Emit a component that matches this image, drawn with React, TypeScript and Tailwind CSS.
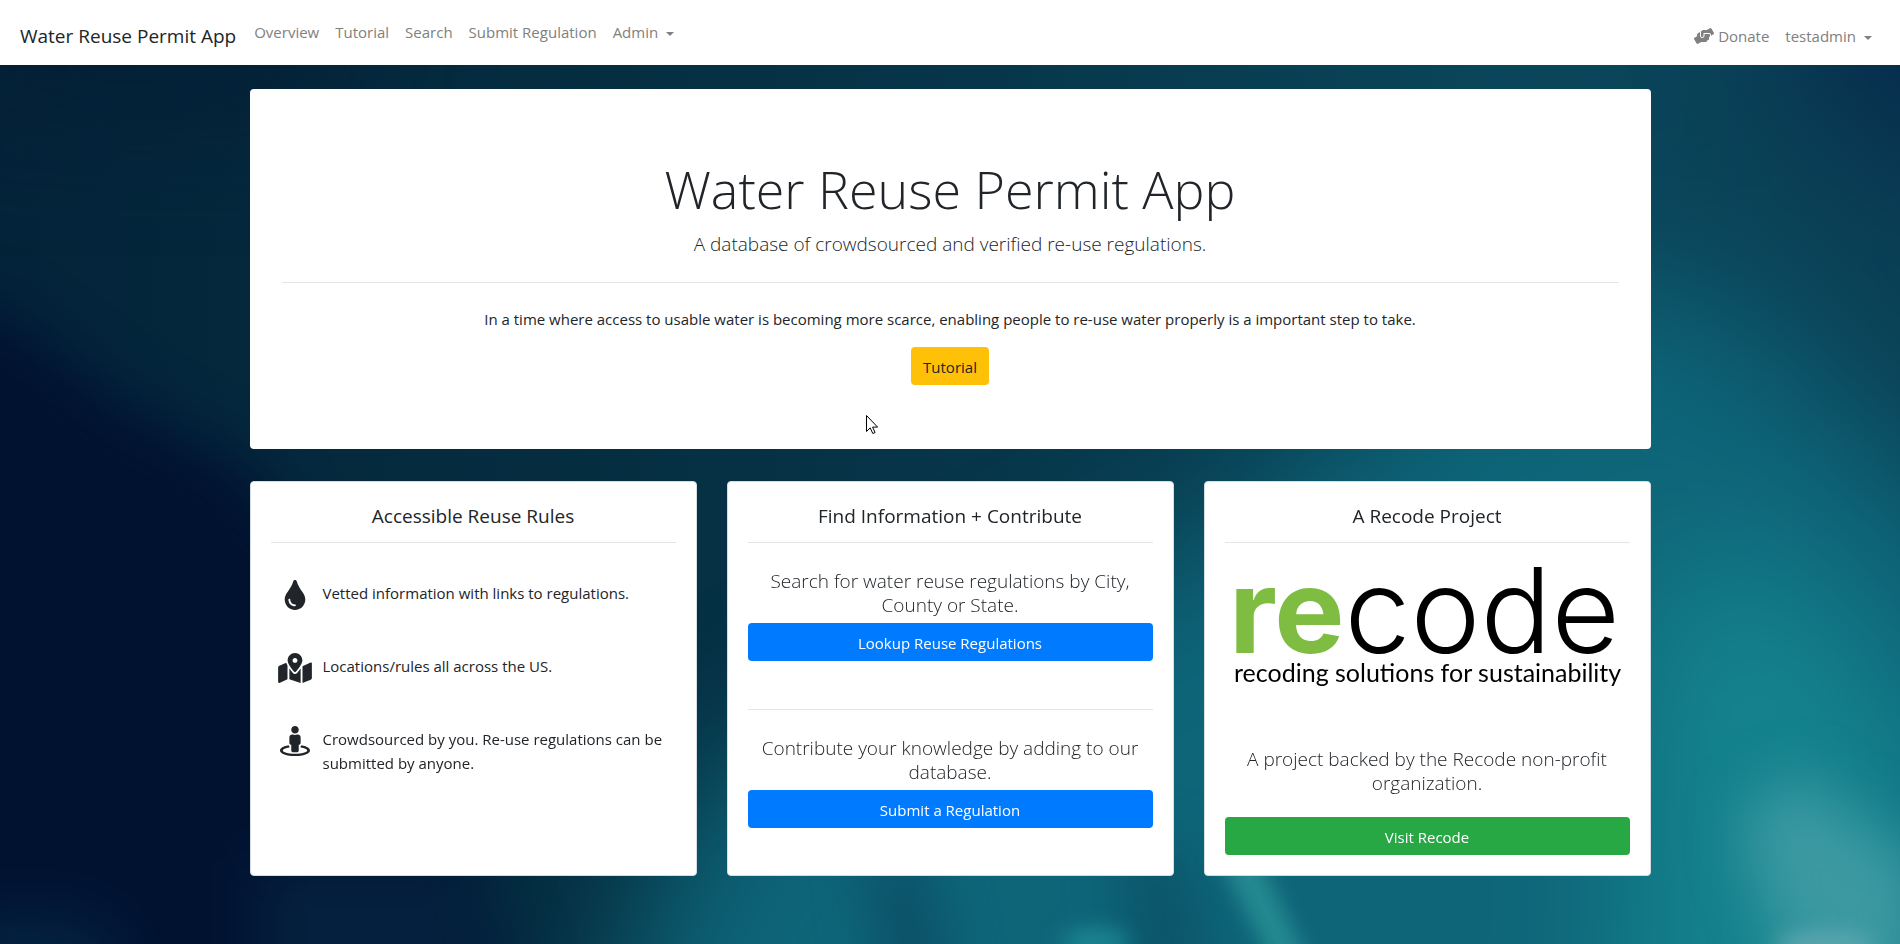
import { FaTint, FaMapMarkedAlt, FaStreetView, FaHandsHelping } from "react-icons/fa";
import type { ReactNode } from "react";

const card = "flex flex-col rounded border border-[#d5dde0] bg-white p-5";
const rule = "border-t border-[#e5e5e5]";
const button = "block w-full rounded px-3 pt-2 pb-[6px] text-center text-[15px] leading-6 text-white";

function Caret() {
  return (
    <svg className="ml-2 inline-block h-1 w-2 align-middle" viewBox="0 0 8 4" aria-hidden="true">
      <path d="M0 0h8L4 4z" fill="currentColor" />
    </svg>
  );
}

function CardTitle({ children }: { children: ReactNode }) {
  return (
    <h2 className="mb-6 border-b border-[#e5e5e5] pt-[2px] pb-[14px] text-center text-[19px] leading-6">{children}</h2>
  );
}

function Lead({ children }: { children: ReactNode }) {
  return <p className="pt-[2px] text-center text-[19px] leading-6 font-light">{children}</p>;
}

function Feature({ icon, children }: { icon: ReactNode; children: ReactNode }) {
  return (
    <li className="flex gap-1">
      <span className="flex h-[31px] w-12 shrink-0 items-center justify-center text-[30px]">{icon}</span>
      <span className="pt-[2px] text-[15px] leading-6">{children}</span>
    </li>
  );
}

function RecodeLogo() {
  return (
    <svg className="mb-6 w-full" viewBox="0 0 405 154" role="img" aria-label="recode, recoding solutions for sustainability">
      <text x="4" y="86" fontFamily="Inter, sans-serif" fontSize="118">
        <tspan fontWeight="700" fill="#7fbc42">re</tspan>
        <tspan fontWeight="300" fill="#000">code</tspan>
      </text>
      <text x="9" y="115" fontFamily="Lato, sans-serif" fontSize="25" fill="#000">
        recoding solutions for sustainability
      </text>
    </svg>
  );
}

function WaterBackground() {
  return (
    <svg
      aria-hidden="true"
      className="absolute inset-0 -z-10 h-full w-full"
      viewBox="0 0 1900 944"
      preserveAspectRatio="none"
    >
      <defs>
        <linearGradient id="base" x1="0" y1="0" x2="1" y2="0">
          <stop offset="0" stopColor="#04243a" />
          <stop offset="0.3" stopColor="#052d40" />
          <stop offset="0.5" stopColor="#073549" />
          <stop offset="0.8" stopColor="#0a465b" />
          <stop offset="1" stopColor="#0a4056" />
        </linearGradient>
        <filter id="wide" x="-50%" y="-50%" width="200%" height="200%" colorInterpolationFilters="sRGB">
          <feGaussianBlur stdDeviation="70" />
        </filter>
        <filter id="soft" x="-50%" y="-50%" width="200%" height="200%" colorInterpolationFilters="sRGB">
          <feGaussianBlur stdDeviation="28" />
        </filter>
        <filter id="fine" x="-100%" y="-50%" width="300%" height="200%" colorInterpolationFilters="sRGB">
          <feGaussianBlur stdDeviation="10" />
        </filter>
      </defs>
      <rect width="1900" height="944" fill="url(#base)" />
      <g filter="url(#wide)">
        <path d="M580 1150 680 800 1250 520 1560 280 1720 300 2050 600V1150z" fill="#0e6578" />
        <path d="M1640 600 1770 540 1960 780V1100H1620z" fill="#14848e" />
        <path d="M1760-40H2050V190L1850 130z" fill="#06294a" />
        <path d="M-60 0H350V90H-60z" fill="#04182f" opacity="0.8" />
      </g>
      <g filter="url(#soft)">
        <path d="M-80 300 0 310 120 400 250 470 430 720 540 1050H-80z" fill="#011231" />
        <path d="M-40 920H90L140 1000H-40z" fill="#042442" />
        <path d="M260 860H470L530 1000H260z" fill="#04203e" />
        <path d="M870 850H920L950 1000H890z" fill="#0b4d64" />
        <path d="M1120 850H1180L1210 1000H1150z" fill="#0b5166" />
        <path d="M1740 820 1800 775 1850 815 1920 860V1000H1800L1760 890z" fill="#409ba4" opacity="0.9" />
      </g>
      <g filter="url(#fine)">
        <path d="M1215 850H1255L1312 970H1275z" fill="#2b9497" opacity="0.8" />
        <ellipse cx="1095" cy="942" rx="34" ry="14" fill="#1c8690" />
        <ellipse cx="1825" cy="946" rx="50" ry="14" fill="#5ba6af" />
      </g>
    </svg>
  );
}

export default function App() {
  return (
    <div className="relative isolate flex min-h-screen flex-col overflow-hidden font-['Open_Sans',sans-serif] text-[#212529]">
      <WaterBackground />
      <nav className="flex min-h-[65px] flex-wrap items-start bg-white px-5 py-2">
        <a href="#home" className="mt-[13px] mr-[18px] text-[19px] leading-[30px]">Water Reuse Permit App</a>
        <ul className="mt-3 flex grow gap-4 text-[15px] leading-6 text-[#808080]">
          <li><a href="#overview">Overview</a></li>
          <li><a href="#tutorial">Tutorial</a></li>
          <li><a href="#search">Search</a></li>
          <li><a href="#submit">Submit Regulation</a></li>
          <li><button type="button">Admin<Caret /></button></li>
        </ul>
        <ul className="mt-4 flex gap-4 pr-2 text-[15px] leading-6 text-[#808080]">
          <li>
            <a href="#donate" className="flex items-center gap-1">
              <FaHandsHelping className="h-4 w-5" />Donate
            </a>
          </li>
          <li><button type="button">testadmin<Caret /></button></li>
        </ul>
      </nav>

      <main className="mx-auto w-3/4 px-3 py-6">
        <header className="relative rounded bg-white px-8 py-16 text-center">
          <h1 className="mb-[6px] pt-[2px] text-[52px] leading-[67px] font-light">Water Reuse Permit App</h1>
          <p className="pt-[2px] text-[19px] leading-7 font-light">A database of crowdsourced and verified re-use regulations.</p>
          <hr className={`my-6 ${rule}`} />
          <p className="mb-4 text-[15px] leading-6">
            In a time where access to usable water is becoming more scarce, enabling people to re-use water properly is a important step to take.
          </p>
          <a href="#tutorial" className="inline-block rounded bg-[#ffc107] px-3 pt-2 pb-[6px] align-top text-[15px] leading-6">Tutorial</a>
          <svg className="absolute top-[326px] left-[44%] h-5 w-3" viewBox="0 0 12 20" aria-hidden="true">
            <path d="M.5.5v16l3.700-3.600 2.600 5.600 2.300-1-2.500-5.400h5z" fill="#fff" stroke="#000" />
          </svg>
        </header>

        <div className="mt-8 grid grid-cols-3 gap-[30px]">
          <section className={card}>
            <CardTitle>Accessible Reuse Rules</CardTitle>
            <ul className="flex flex-col gap-[42px] pt-3">
              <Feature icon={<FaTint />}>Vetted information with links to regulations.</Feature>
              <Feature icon={<FaMapMarkedAlt className="h-[30px] w-[34px]" />}>Locations/rules all across the US.</Feature>
              <Feature icon={<FaStreetView />}>Crowdsourced by you. Re-use regulations can be submitted by anyone.</Feature>
            </ul>
          </section>

          <section className={card}>
            <CardTitle>Find Information + Contribute</CardTitle>
            <Lead>Search for water reuse regulations by City, County or State.</Lead>
            <a href="#lookup" className={`mt-[6px] bg-[#007bff] ${button}`}>Lookup Reuse Regulations</a>
            <hr className={`mt-12 mb-6 ${rule}`} />
            <Lead>Contribute your knowledge by adding to our database.</Lead>
            <a href="#submit" className={`mt-[6px] bg-[#007bff] ${button}`}>Submit a Regulation</a>
          </section>

          <section className={card}>
            <CardTitle>A Recode Project</CardTitle>
            <RecodeLogo />
            <Lead>A project backed by the Recode non-profit organization.</Lead>
            <a href="#recode" className={`mt-[22px] bg-[#28a745] ${button}`}>Visit Recode</a>
          </section>
        </div>
      </main>
    </div>
  );
}
